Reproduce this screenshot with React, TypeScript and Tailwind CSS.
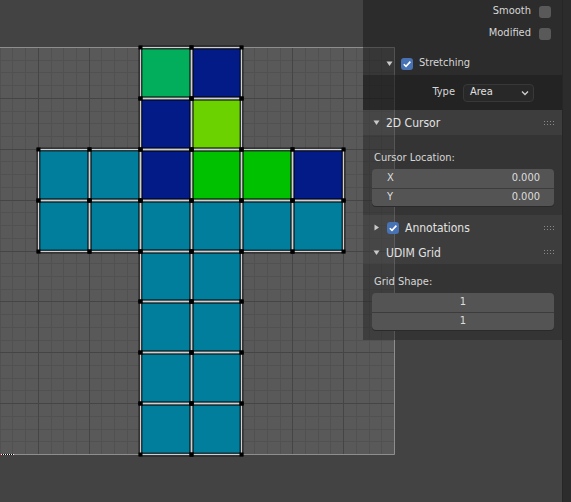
import React from 'react'

const S = 407 / 8
const X0 = -13
const Y0 = 47
const TEAL = '#017e9b'
const NAVY = '#021b86'

const faces: [number, number, string][] = [
  [0, 3, '#02ae5b'],
  [0, 4, NAVY],
  [1, 3, NAVY],
  [1, 4, '#6bd200'],
  [2, 1, TEAL],
  [2, 2, TEAL],
  [2, 3, NAVY],
  [2, 4, '#00c100'],
  [2, 5, '#00c100'],
  [2, 6, NAVY],
  [3, 1, TEAL],
  [3, 2, TEAL],
  [3, 3, TEAL],
  [3, 4, TEAL],
  [3, 5, TEAL],
  [3, 6, TEAL],
  [4, 3, TEAL],
  [4, 4, TEAL],
  [5, 3, TEAL],
  [5, 4, TEAL],
  [6, 3, TEAL],
  [6, 4, TEAL],
  [7, 3, TEAL],
  [7, 4, TEAL],
]

function UVCanvas() {
  const minorV: number[] = []
  const majorV: number[] = []
  const minorH: number[] = []
  const majorH: number[] = []
  for (let i = 1; i < 32; i++) {
    const x = Math.round(X0 + (i * S) / 4) + 0.5
    const y = Math.round(Y0 + (i * S) / 4) + 0.5
    if (x > 0) (i % 4 ? minorV : majorV).push(x)
    ;(i % 4 ? minorH : majorH).push(y)
  }
  const r = (c: number, rr: number) => ({ x: Math.round(X0 + c * S), y: Math.round(Y0 + rr * S) })
  return (
    <svg width="571" height="502" className="block">
      <rect x="0" y={Y0} width="395" height="408" fill="#595959" />
      {minorV.map((x) => <line key={'mv' + x} x1={x} x2={x} y1={Y0} y2={454} stroke="#515151" />)}
      {minorH.map((y) => <line key={'mh' + y} x1={0} x2={394} y1={y} y2={y} stroke="#515151" />)}
      {majorV.map((x) => <line key={'Mv' + x} x1={x} x2={x} y1={Y0} y2={454} stroke="#454545" />)}
      {majorH.map((y) => <line key={'Mh' + y} x1={0} x2={394} y1={y} y2={y} stroke="#454545" />)}
      <polyline points="0,47.5 394.5,47.5 394.5,454.5 0,454.5" fill="none" stroke="#8e8e8e" />
      <line x1="0" x2="14" y1="454.5" y2="454.5" stroke="#000" />
      <line x1="1" x2="14" y1="454.5" y2="454.5" stroke="#fff" strokeDasharray="1 1" />
      <line x1="0" x2="1" y1="454.5" y2="454.5" stroke="#e02020" />
      {faces.map(([row, col, c]) => {
        const a = r(col, row)
        const b = r(col + 1, row + 1)
        return <rect key={'f' + row + col} x={a.x} y={a.y} width={b.x - a.x} height={b.y - a.y} fill={c} />
      })}
      {faces.map(([row, col]) => {
        const a = r(col, row)
        const b = r(col + 1, row + 1)
        return <rect key={'o' + row + col} x={a.x + 0.5} y={a.y + 0.5} width={b.x - a.x} height={b.y - a.y} fill="none" stroke="#000" strokeWidth="3.6" />
      })}
      {faces.map(([row, col]) => {
        const a = r(col, row)
        const b = r(col + 1, row + 1)
        return <rect key={'e' + row + col} x={a.x + 0.5} y={a.y + 0.5} width={b.x - a.x} height={b.y - a.y} fill="none" stroke="#cdd0d4" strokeWidth="1.5" />
      })}
      {faces.map(([row, col]) => {
        const pts = [r(col, row), r(col + 1, row), r(col, row + 1), r(col + 1, row + 1)]
        return pts.map((p, i) => <rect key={'v' + row + col + i} x={p.x - 1.5} y={p.y - 1.5} width="4" height="4" fill="#000" />)
      })}
    </svg>
  )
}

function Tri({ down = true }: { down?: boolean }) {
  return (
    <svg width="7" height="7" className="shrink-0">
      <polygon points={down ? '0.5,1.5 6.5,1.5 3.5,6' : '1.5,0.5 6,3.5 1.5,6.5'} fill="#c9c9c9" />
    </svg>
  )
}

function Check({ on = false }: { on?: boolean }) {
  return on ? (
    <span className="flex h-[12px] w-[12px] shrink-0 items-center justify-center rounded-[3px] bg-[#4772b3]">
      <svg width="10" height="10" viewBox="0 0 10 10">
        <polyline points="1.8,5.2 4,7.4 8.4,2.6" fill="none" stroke="#fff" strokeWidth="1.6" />
      </svg>
    </span>
  ) : (
    <span className="h-[12px] w-[12px] shrink-0 rounded-[3px] bg-[#595959]" />
  )
}

function Grip() {
  return (
    <svg width="11" height="4" className="ml-auto shrink-0">
      {[0, 3, 6, 9].map((x) => (
        <g key={x}>
          <rect x={x} y="0" width="1" height="1" fill="#8a8a8a" />
          <rect x={x} y="3" width="1" height="1" fill="#8a8a8a" />
        </g>
      ))}
    </svg>
  )
}

function Header({ title, open = true, check = false, h }: { title: string; open?: boolean; check?: boolean; h: string }) {
  return (
    <div className={`flex items-center bg-[#3a3a3a]/60 pl-[10px] pr-[7px] ${h}`}>
      <Tri down={open} />
      {check ? (
        <span className="ml-[7px] flex items-center gap-[6px]">
          <Check on />
          <span className="pt-[1px] text-[12px] text-[#e2e2e2]">{title}</span>
        </span>
      ) : (
        <span className="ml-[6px] pt-[1px] text-[12px] text-[#e2e2e2]">{title}</span>
      )}
      <Grip />
    </div>
  )
}

function Fields({ rows }: { rows: [string, string][] }) {
  return (
    <div className="mt-[1px] flex flex-col overflow-hidden rounded-[4px] bg-[#545454] shadow-[0_1px_0_#2a2a2a]">
      {rows.map(([l, v], i) => (
        <div key={i} className={`flex items-center px-[14px] text-[11px] text-[#dddddd] ${i ? 'h-[18px] border-t border-[#3c3c3c]' : 'h-[19px]'} ${l ? 'justify-between' : 'justify-center'}`}>
          {l && <span className="pl-[1px]">{l}</span>}
          <span>{v}</span>
        </div>
      ))}
    </div>
  )
}

function Sidebar() {
  return (
    <aside className="absolute right-0 top-0 flex h-full">
      <div className="flex w-[199px] flex-col self-start">
        <div className="flex flex-col bg-[#151515]/50 pb-[1px] text-[11px] text-[#d6d6d6]">
          <div className="flex h-[22px] items-center justify-end gap-[8px] pr-[11px] pt-[1px]">
            <span>Smooth</span>
            <Check />
          </div>
          <div className="flex h-[22px] items-center justify-end gap-[8px] pr-[11px] pt-[1px]">
            <span>Modified</span>
            <Check />
          </div>
          <div className="mt-[8px] flex h-[22px] items-center pl-[23px] pt-[1px]">
            <Tri />
            <span className="ml-[8px] flex items-center gap-[6px]">
              <Check on />
              <span>Stretching</span>
            </span>
          </div>
        </div>
        <div className="flex h-[35px] items-center gap-[8px] bg-[#161616]/70 text-[11px] text-[#d6d6d6]">
          <span className="w-[92px] text-right">Type</span>
          <div className="flex h-[18px] w-[71px] items-center justify-between rounded-[4px] border border-[#383838] bg-[#282828] pl-[6px] pr-[4px] text-[#e0e0e0]">
            <span>Area</span>
            <svg width="8" height="6">
              <polyline points="1,1.5 4,4.5 7,1.5" fill="none" stroke="#cfcfcf" strokeWidth="1.3" />
            </svg>
          </div>
        </div>
        <Header title="2D Cursor" h="h-[25px]" />
        <div className="flex flex-col bg-[#282828]/55 pb-[9px] pl-[9px] pr-[8px] pt-[13px] text-[11px] text-[#d6d6d6]">
          <div className="flex h-[20px] items-center pl-[2px]">Cursor Location:</div>
          <Fields rows={[['X', '0.000'], ['Y', '0.000']]} />
        </div>
        <Header title="Annotations" open={false} check h="h-[25px]" />
        <Header title="UDIM Grid" h="h-[24px]" />
        <div className="flex flex-col bg-[#282828]/55 pb-[10px] pl-[9px] pr-[8px] pt-[8px] text-[11px] text-[#d6d6d6]">
          <div className="flex h-[20px] items-center pl-[2px]">Grid Shape:</div>
          <Fields rows={[['', '1'], ['', '1']]} />
        </div>
      </div>
      <div className="h-full w-[9px] border-l border-[#262626] bg-[#2c2c2c]" />
    </aside>
  )
}

export default function App() {
  return (
    <div className="relative h-[502px] w-[571px] overflow-hidden bg-[#434343] font-['DejaVu_Sans_Condensed','DejaVu_Sans',sans-serif]">
      <UVCanvas />
      <Sidebar />
    </div>
  )
}
